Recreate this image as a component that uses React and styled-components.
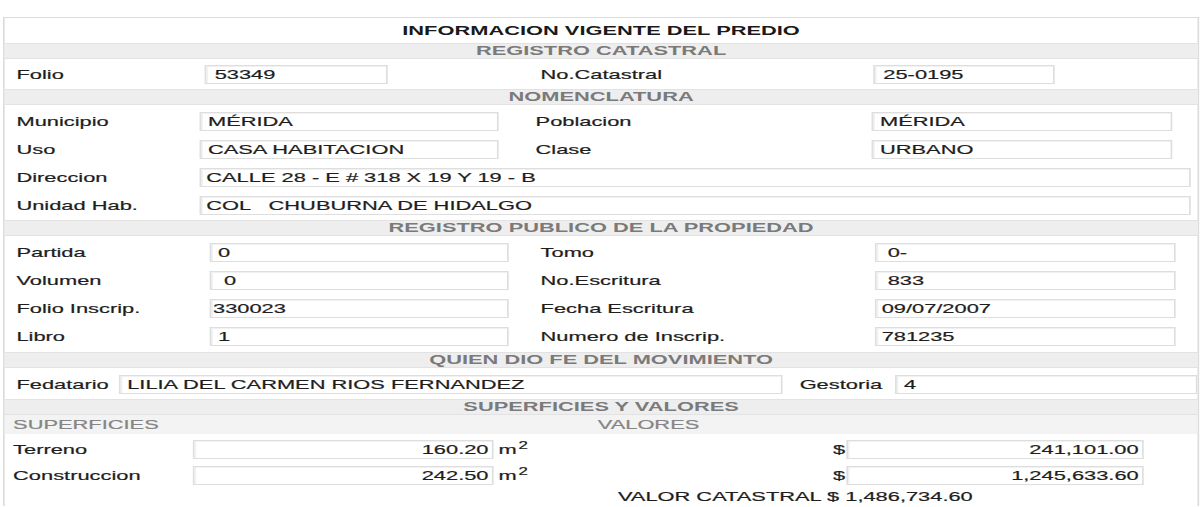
import React from 'react';
import styled, { createGlobalStyle } from 'styled-components';

// the whole sheet is drawn narrow and stretched sideways, like the original capture
const STRETCH = 1.68;

const GlobalStyle = createGlobalStyle`
  html, body {
    margin: 0;
    padding: 0;
    background: #ffffff;
  }
  body {
    font-family: 'Liberation Sans', Arial, sans-serif;
    font-size: 13px;
    color: #1e1e1e;
    overflow: hidden;
  }
`;

const Sheet = styled.div`
  width: 712px;
  box-sizing: border-box;
  margin: 17px 0 0 3px;
  border: 1px solid #dcdcdc;
  border-bottom: none;
  transform: scaleX(${STRETCH});
  transform-origin: 0 0;
  -webkit-text-stroke: 0.2px currentColor;
`;

const Title = styled.div`
  height: 25px;
  line-height: 25px;
  text-align: center;
  font-weight: bold;
  color: #1a1a1a;
  -webkit-text-stroke: 0;
`;

const Band = styled.div`
  height: 14px;
  line-height: 14px;
  background: #eeeeee;
  border-top: 1px solid #e2e2e2;
  border-bottom: 1px solid #e2e2e2;
  text-align: center;
  font-weight: bold;
  color: #7a7a7a;
  -webkit-text-stroke: 0;
`;

const Grid = styled.div`
  display: grid;
  grid-template-columns: ${p => p.$cols};
  grid-auto-rows: ${p => p.$row || 28}px;
  align-items: center;
  padding: ${p => p.$pad || '0'};
`;

const Label = styled.div`
  padding-left: ${p => p.$indent ?? 7}px;
  white-space: nowrap;
`;

const Field = styled.div`
  width: ${p => p.$w}px;
  height: 19px;
  box-sizing: border-box;
  border: 1px solid #dedede;
  box-shadow: inset 1px 1px 0 #f1f1f1;
  background: #ffffff;
  padding: 0 ${p => (p.$align === 'right' ? 2 : 0)}px 0 ${p => (p.$pl ?? 4)}px;
  line-height: 17px;
  white-space: pre;
  overflow: hidden;
  text-align: ${p => p.$align || 'left'};
  grid-column: ${p => p.$span || 'auto'};
`;

const Inline = styled.div`
  display: flex;
  align-items: center;
  height: 30px;
  padding-top: 1px;
`;

const InlineLabel = styled.div`
  padding: 0 ${p => p.$gap}px 0 ${p => p.$left}px;
  white-space: nowrap;
`;

const SubHeader = styled.div`
  display: grid;
  grid-template-columns: 353px 1fr;
  align-items: center;
  height: 19px;
  background: #f3f3f3;
  color: #858585;

  & > span:first-child {
    padding-left: 5px;
  }
`;

const Unit = styled.span`
  padding-left: 3px;
  white-space: nowrap;
`;

const Sup = styled.sup`
  font-size: 10px;
  line-height: 0;
  vertical-align: 5px;
  margin-left: 1px;
`;

const Total = styled.div`
  height: 18px;
  line-height: 18px;
  padding-left: 365px;
  white-space: nowrap;
`;

const catastro = [
  { label: 'Municipio', value: 'MÉRIDA', label2: 'Poblacion', value2: 'MÉRIDA' },
  { label: 'Uso', value: 'CASA HABITACION', label2: 'Clase', value2: 'URBANO' },
  { label: 'Direccion', value: 'CALLE 28 - E # 318 X 19 Y 19 - B' },
  { label: 'Unidad Hab.', value: 'COL   CHUBURNA DE HIDALGO' },
];

const registro = [
  { label: 'Partida', value: '0', label2: 'Tomo', value2: ' 0-' },
  { label: 'Volumen', value: ' 0', label2: 'No.Escritura', value2: ' 833' },
  { label: 'Folio Inscrip.', value: '330023', pl: 1, label2: 'Fecha Escritura', value2: '09/07/2007' },
  { label: 'Libro', value: '1', label2: 'Numero de Inscrip.', value2: '781235' },
];

const superficies = [
  { label: 'Terreno', area: '160.20', valor: '241,101.00' },
  { label: 'Construccion', area: '242.50', valor: '1,245,633.60' },
];

export default function App() {
  return (
    <>
      <GlobalStyle />
      <Sheet>
        <Title>INFORMACION VIGENTE DEL PREDIO</Title>
        <Band>REGISTRO CATASTRAL</Band>
        <Grid $cols="119px 200px 198px 1fr" $row={30}>
          <Label>Folio</Label>
          <Field $w={109} $pl={5}>53349</Field>
          <Label $indent={0}>No.Catastral</Label>
          <Field $w={108} $pl={5}>25-0195</Field>
        </Grid>

        <Band>NOMENCLATURA</Band>
        <Grid $cols="116px 200px 200px 1fr" $pad="2px 0 1px">
          {catastro.map(r => (
            <React.Fragment key={r.label}>
              <Label>{r.label}</Label>
              {r.label2 ? (
                <>
                  <Field $w={178}>{r.value}</Field>
                  <Label $indent={0}>{r.label2}</Label>
                  <Field $w={179}>{r.value2}</Field>
                </>
              ) : (
                <Field $w={590} $span="2 / 5" $pl={3}>{r.value}</Field>
              )}
            </React.Fragment>
          ))}
        </Grid>

        <Band>REGISTRO PUBLICO DE LA PROPIEDAD</Band>
        <Grid $cols="122px 197px 199px 1fr" $pad="2px 0">
          {registro.map(r => (
            <React.Fragment key={r.label}>
              <Label>{r.label}</Label>
              <Field $w={178} $pl={r.pl ?? 4}>{r.value}</Field>
              <Label $indent={0}>{r.label2}</Label>
              <Field $w={179} $pl={3}>{r.value2}</Field>
            </React.Fragment>
          ))}
        </Grid>

        <Band>QUIEN DIO FE DEL MOVIMIENTO</Band>
        <Inline>
          <InlineLabel $left={7} $gap={6}>Fedatario</InlineLabel>
          <Field $w={396}>LILIA DEL CARMEN RIOS FERNANDEZ</Field>
          <InlineLabel $left={10} $gap={8}>Gestoria</InlineLabel>
          <Field $w={180}>4</Field>
        </Inline>

        <Band>SUPERFICIES Y VALORES</Band>
        <SubHeader>
          <span>SUPERFICIES</span>
          <span>VALORES</span>
        </SubHeader>
        <Grid $cols="112px 179px 202px 8px 1fr" $row={26} $pad="2px 0 0">
          {superficies.map(r => (
            <React.Fragment key={r.label}>
              <Label $indent={5}>{r.label}</Label>
              <Field $w={179} $align="right">{r.area}</Field>
              <Unit>m<Sup>2</Sup></Unit>
              <span>$</span>
              <Field $w={177} $align="right">{r.valor}</Field>
            </React.Fragment>
          ))}
        </Grid>
        <Total>VALOR CATASTRAL $ 1,486,734.60</Total>
      </Sheet>
    </>
  );
}
